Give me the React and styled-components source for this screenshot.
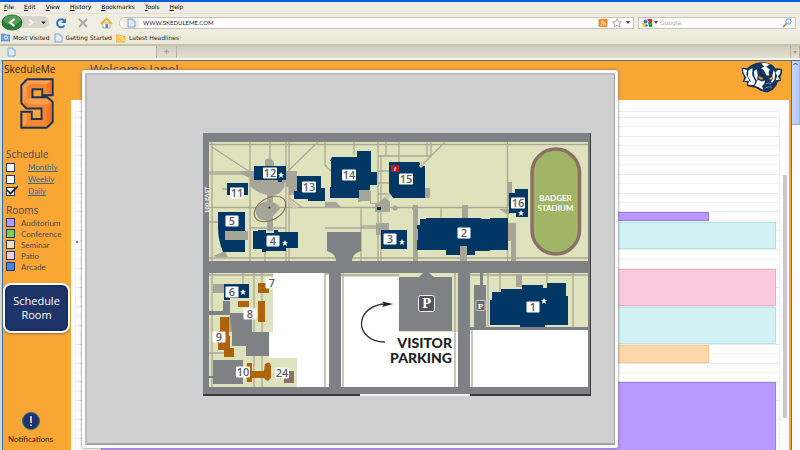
import React from 'react';
import styled, { createGlobalStyle } from 'styled-components';

const GlobalStyle = createGlobalStyle`
  * { box-sizing: border-box; }
  body { margin: 0; overflow: hidden; background: #ece9d8; }
  button, input { font: inherit; margin: 0; padding: 0; border: 0; background: none; }
`;

const NAVY = '#1f3468';
const ORANGE = '#faa635';

const Window = styled.div`
  height: 100vh;
  display: flex;
  flex-direction: column;
  position: relative;
  font-family: 'DejaVu Sans', sans-serif;
  font-size: 6px;
  color: #222;
`;

const TitleBar = styled.div`
  height: 2px;
  flex: none;
  background: #0a5be0;
`;

const Chrome = styled.header`
  flex: none;
  background: linear-gradient(#f0eee2, #f0eee3 45%, #e6e2cd);
`;

const MenuBar = styled.nav`
  height: 11px;
  display: flex;
  align-items: flex-start;
  gap: 10px;
  padding: 0 4px;
`;

const MenuButton = styled.button`
  line-height: 10px;
  &::first-letter { text-decoration: underline; }
`;

const NavBar = styled.div`
  height: 18px;
  display: flex;
  align-items: center;
  padding: 0 4px 0 1px;
  border-top: 1px solid #e4e1d0;
`;

const IconButton = styled.button`
  display: flex;
  flex: none;
  width: ${(p) => p.$w}px;
  margin-right: ${(p) => p.$gap || 0}px;
  svg { display: block; width: 100%; }
`;

const Field = styled.div`
  height: 12px;
  flex: ${(p) => p.$flex};
  display: flex;
  align-items: center;
  gap: ${(p) => p.$gap}px;
  padding: 0 3px;
  border: 1px solid #c9c5b5;
  border-radius: ${(p) => p.$radius};
  background: #fff;
  overflow: hidden;
  svg { flex: none; display: block; }
`;

const FieldCap = styled.span`
  width: 16px;
  height: 12px;
  flex: none;
  display: flex;
  align-items: center;
  justify-content: center;
  background: #f0eee2;
`;

const UrlInput = styled.input`
  flex: 1;
  min-width: 0;
  height: 10px;
  font-family: Lato, sans-serif;
  font-size: 6px;
  color: #222;
  outline: 0;
`;

const SearchInput = styled(UrlInput)`
  font-family: 'DejaVu Sans', sans-serif;
  &::placeholder { color: #aaa; opacity: 1; }
`;

const Bookmarks = styled.nav`
  height: 13px;
  display: flex;
  align-items: center;
  gap: 4px;
  padding: 0 1px;
`;

const Bookmark = styled.a`
  display: flex;
  align-items: center;
  gap: 3px;
  color: inherit;
  text-decoration: none;
  white-space: nowrap;
`;

const Tabs = styled.div`
  height: 16px;
  display: flex;
  align-items: stretch;
  border-top: 2px solid #c5c1b1;
  border-bottom: 2px solid #f5f3ea;
  background: linear-gradient(#cfccbc, #e4e1d2);
`;

const Tab = styled.div`
  width: 157px;
  padding: 1px 7px;
  background: #e9e6d7;
  border-right: 1px solid #b5b1a2;
`;

const TabButton = styled.button`
  width: 20px;
  border-right: 1px solid #b5b1a2;
  color: #888;
  line-height: 8px;
  &:last-child { width: 10px; margin-left: auto; border-left: 1px solid #b5b1a2; }
`;

const Page = styled.main`
  flex: 1;
  min-height: 0;
  display: flex;
  border-top: 1px solid #56737f;
  border-left: 2px solid #ded6c5;
  font-family: Lato, sans-serif;
`;

const Sidebar = styled.aside`
  width: 69px;
  flex: none;
  display: flex;
  flex-direction: column;
  padding: 1px 2px 6px 3px;
  border-left: 1px solid #2870a8;
  background: ${ORANGE};
`;

const Brand = styled.div`
  font: 10px/14px 'Open Sans', sans-serif;
  color: #1c1c1c;
  white-space: nowrap;
  margin-left: -2px;
`;

const TeamLogo = styled.svg`
  width: 34px;
  height: 51px;
  flex: none;
  margin: 2px 0 18px 14px;
`;

const Heading = styled.h2`
  margin: 0;
  font: 10px/14px 'Open Sans', sans-serif;
  color: #444a55;
`;

const List = styled.ul`
  margin: 0 0 6px;
  padding: 0;
  list-style: none;
`;

const ViewRow = styled.li`
  height: 12px;
  display: flex;
  align-items: center;
  gap: 13px;
`;

const CheckWrap = styled.span`
  position: relative;
  display: flex;
  svg {
    position: absolute;
    left: 0;
    top: -2px;
    pointer-events: none;
    opacity: 0;
  }
  input:checked + svg { opacity: 1; }
`;

const Checkbox = styled.input`
  appearance: none;
  width: 9px;
  height: 9px;
  background: #fff;
  border: 1px solid #27375f;
`;

const ViewLink = styled.a`
  font-size: 8px;
  line-height: 10px;
  color: #2f6c93;
`;

const RoomRow = styled.li`
  height: 11px;
  display: flex;
  align-items: center;
  gap: 6px;
  font-size: 8px;
  line-height: 10px;
  color: #4d4a50;
`;

const Swatch = styled.span`
  width: 9px;
  height: 9px;
  border: 1px solid #2b3a66;
  background: ${(p) => p.$color};
`;

const ScheduleButton = styled.button`
  height: 50px;
  flex: none;
  margin: 5px -1px 0 -3px;
  border: 2px solid #fff;
  border-radius: 8px;
  background: ${NAVY};
  box-shadow: inset 0 0 3px #0d1c45, 0 1px 2px #99662a;
  color: #fff;
  font: 11px/14px 'Open Sans', sans-serif;
`;

const Notifications = styled.button`
  margin-top: auto;
  display: flex;
  flex-direction: column;
  align-items: center;
  gap: 4px;
  padding-right: 14px;
  color: #1c1c1c;
  font-size: 8px;
  line-height: 10px;
`;

const Body = styled.div`
  flex: 1;
  min-width: 0;
  display: flex;
  flex-direction: column;
  border-right: 2px solid ${ORANGE};
  background: #fff;
`;

const Banner = styled.div`
  height: 39px;
  flex: none;
  display: flex;
  justify-content: space-between;
  padding: 0 6px 0 19px;
  background: ${ORANGE};
`;

const Welcome = styled.h1`
  margin: 0;
  font: 13px/16px 'Open Sans', sans-serif;
  color: #3d4763;
`;

const Sheet = styled.section`
  flex: 1;
  min-height: 0;
  display: flex;
  align-items: stretch;
  padding: 11px 2px 0 4px;
  gap: 3px;
`;

const Calendar = styled.div`
  flex: 1;
  display: flex;
  flex-direction: column;
  overflow: hidden;
`;

const AllDay = styled.div`
  height: 7px;
  flex: none;
  border: 1px solid #eee;
`;

const DayGrid = styled.div`
  display: grid;
  grid-template-columns: 25px 9fr 1fr 3px;
  grid-template-rows: repeat(4, 9px 10px 9px 10px 9px 10px 9px 10px 9px);
  border: 1px solid #eee;
  border-top: 0;
  border-bottom: 0;
`;

const Slot = styled.div`
  grid-column: 1 / -1;
  grid-row: ${(p) => p.$row};
  border-bottom: 1px solid ${(p) => (p.$row % 2 ? '#f4f4f4' : '#ebebeb')};
`;

const NowMark = styled.div`
  grid-column: 1;
  grid-row: 14;
  width: 2px;
  height: 2px;
  background: #d8505a;
`;

const Event = styled.div`
  grid-row: ${(p) => p.$from} / ${(p) => p.$to};
  grid-column: 2 / ${(p) => (p.$short ? 3 : 4)};
  border: 1px solid ${(p) => p.$edge};
  background: ${(p) => p.$fill};
  margin-bottom: 1px;
  z-index: 1;
`;

const SheetScroll = styled.div`
  width: 4px;
  flex: none;
  padding-top: 64px;
  &::before { content: ''; display: block; height: 243px; background: #c8caca; }
`;

const PageScroll = styled.div`
  width: 9px;
  flex: none;
  border-left: 1px solid #55748c;
  background: #fdfcf8;
`;

const ScrollThumb = styled.div`
  height: 64px;
  background: linear-gradient(90deg, #c5d5fb, #b4c8f6);
  border-right: 1px solid #a3b9ea;
  border-bottom: 1px solid #98afe2;
  svg { display: block; }
`;

const Dialog = styled.div`
  position: absolute;
  left: 82px;
  right: 182px;
  top: 70px;
  bottom: 2px;
  z-index: 3;
  border: 3px solid #fafafa;
  border-radius: 2px;
  padding: 60px 24px 0 118px;
  background: #d0d0d0;
  box-shadow: 0 0 3px #666, inset 2px 2px 0 #bcbcbc, inset -1px -2px 0 #a2a2a2;
`;

const MapSvg = styled.svg`
  display: block;
  width: 100%;
  height: auto;
`;

function PageIcon() {
  return (
    <svg width="9" height="10" viewBox="0 0 9 10">
      <path d="M1 1h5l2 2v6H1z" fill="#dfeaff" stroke="#6d91cf" strokeWidth=".8" />
      <path d="M6 1v2h2" fill="#fff" stroke="#6d91cf" strokeWidth=".6" />
    </svg>
  );
}

function Feed({ folder }) {
  return (
    <svg width="10" height="10" viewBox="0 0 10 10">
      {folder && <path d="M0 2h4l1 1h4v6H0z" fill="#ffd660" stroke="#d39a1c" strokeWidth=".6" />}
      <rect x={folder ? 2 : 0.5} y={folder ? 3 : 1} width={folder ? 7 : 9} height={folder ? 6 : 8} rx="1" fill={folder ? '#f8b73a' : '#eb8a2c'} />
      <path d="M3 4.6a3 3 0 0 1 3 3M3 3a5 5 0 0 1 5 5" fill="none" stroke="#fff" strokeWidth=".9" />
      <circle cx="3.3" cy="7.3" r=".8" fill="#fff" />
    </svg>
  );
}

function Caret() {
  return <svg width="4" height="3" viewBox="0 0 4 3"><path d="M0 0h4L2 3z" fill="#444" /></svg>;
}

function BlockS() {
  const shape = 'M80 70H158V118H126V100H96V124H142L158 138V198L140 216H62V168H94V190H124V158H78L62 142V88Z';
  return (
    <TeamLogo viewBox="58 66 104 154" preserveAspectRatio="none" role="img" aria-label="S">
      <path d={shape} fill="#f68530" />
      <path d="M82 72H154L140 84H88L78 94V124L66 140V90Z" fill="#fb9f4e" />
      <path d="M80 128H140L150 140L134 146H84L74 134Z" fill="#fb9f4e" />
      <path d="M140 84L154 74V114L140 110ZM140 150L154 142V196L140 204Z" fill="#f17526" />
      <path d="M66 172H78V202L66 212Z" fill="#fb9f4e" />
      <path d={shape} fill="none" stroke="#17365f" strokeWidth="6" />
    </TeamLogo>
  );
}

function Badger() {
  return (
    <svg width="42" height="33" viewBox="604 187 128 98" role="img" aria-label="Badger">
      <path d="M606 206L624 207Q636 193 660 190Q688 187 704 202L708 208L729 209Q731 224 724 234L726 246L716 249L712 260L700 274L684 282L664 277L650 268L622 262L622 250L609 250L614 236Q606 222 606 206Z" fill="#12355f" />
      <path d="M610 210L623 213L620 227L631 248L624 246L614 247L621 236Q610 224 610 210Z" fill="#fff" />
      <path d="M627 214L639 207L638 228L648 249L643 259L626 258L628 247L635 250L625 232Z" fill="#fff" />
      <path d="M643 216L652 211L655 228L653 246L645 234Z" fill="#fff" />
      <path d="M666 193Q680 190 691 196L681 203L692 212L688 219L690 230L682 230L674 215L665 208L675 203Z" fill="#fff" />
      <path d="M655 243L668 248L678 244L675 255L668 262L672 273L656 265L646 261Z" fill="#fff" />
      <path d="M725 213Q725 225 716 233L723 242L710 244L714 231L709 221L716 213Z" fill="#fff" />
      <path d="M704 212L708 224L706 242L699 252L694 248L702 240L699 232Z" fill="#fff" />
      <path d="M657 231L671 238L669 243L659 240ZM690 238L701 233L700 241L692 243Z" fill="#f5a02c" />
      <path d="M681 255Q688 250 696 256M678 268Q688 261 698 266" fill="none" stroke="#a8bfd9" strokeWidth="2" />
    </svg>
  );
}

const MAP_LABELS = [
  [12, 270, 173], [11, 237, 193], [13, 309, 187], [5, 232, 221], [4, 273, 241],
  [14, 349, 175], [15, 406, 179], [3, 390, 239], [2, 464, 233], [16, 518, 203],
  [6, 232, 292], [7, 272, 283], [8, 250, 314], [9, 219, 337], [10, 243, 372],
  [24, 282, 373], [1, 533, 307],
];

const STARS = [[281, 175], [285, 243], [402, 242], [521, 213], [243, 292], [544, 301]];

function CampusMap() {
  return (
    <MapSvg viewBox="203 133 388 263" role="img" aria-label="Campus map">
      <path d="M203 133H591V396H203Z" fill="#808184" />
      <path d="M209 142H588V261H209Z" fill="#dfe3bd" />
      <path d="M209 273H329V387H209ZM341 273H458V387H341ZM470 273H588V387H470Z" fill="#fff" />
      <path d="M209 273H273V332H269V358H297V387H209ZM399 273H458V332H399ZM470 273H588V330H470ZM341 273H399V277H341Z" fill="#dfe3bd" />
      <g fill="none" stroke="#aaa995" strokeWidth="1.3">
        <path d="M209 144.5H588M209 258H588M212 142V261M250 142V261M286 142V261M289 142V261M325 142V165L333 173M209 172H250M209 174H250M212 147L250 172M318 142L286 173M209 207.500H510M222 189H235M209 222H222M250 228H286M265 250V261M354 142V155M378 142V261M381 155V261M386 142V156M399 142V162M427 142V156M431 142V156M378 156H431M378 171H395M378 183H395M378 194H395M445 142L421 166M361 208V261M325 228H378M361 226H378M441 208V220M507.500 142V261M465 205V216M288 197L303 208M417 242H427M270 142V162" />
        <path d="M209 275H273M212 273V387M243 273V284M254 273V387M262 273V387M209 353H225M325 273V387M329 274H325M341 275H399M343 273V387M455 273V387M470 275H588M472 327V387M488 273V327M500 273V291M547 273V283M573 273V327" />
      </g>
      <g fill="#a6a698">
        <path d="M265 160Q270 156 274 162V171H285V180Q286 192 273 196V202Q282 206 279 210L273 216V231H267V221Q254 220 256 209Q260 202 267 201V195Q257 193 250 186V178L241 174V171H265ZM286 171H297V195H289V187H286ZM325 207V202H336L341 207ZM375 213V204H370V201H358V191H371V203H378L385 197L390 202V212H375ZM430 188V198H421V188ZM376 223H389V235H376ZM371 192L360 202H358V190H369ZM462 205H468V218H462ZM508 182H512V206H507ZM499 209H510V214H507ZM507 223H516V261H511V241H507ZM460 246H467V261H460ZM213 256L225 251L228 257H217ZM213 284H225V293H213ZM516 274H522V287H516ZM229 316H232V332H229Z" />
        <path d="M413 205H418V261H413Z" />
        <circle cx="415" cy="208" r="3" /><circle cx="395" cy="208" r="2.500" />
      </g>
      <ellipse cx="270" cy="209" rx="17" ry="11" transform="rotate(-30 270 209)" fill="none" stroke="#8c725c" strokeWidth="1.200" />
      <circle cx="269.500" cy="207.500" r="1" fill="#222" />
      <g fill="#808184">
        <path d="M327 232H361V251Q352 254 352 261H336Q336 254 327 251ZM209 311H223V301H230V313H252V332H269V356H246V346H232V332L230 315H209ZM213 360H243V384H213V378H209V376H213Z" />
        <path d="M399 277H419L423 273H429L434 277H452V331H399ZM474 285H480V273H483V285H486V327H588V330H470V327H474Z" />
      </g>
      <g fill="#003764">
        <path d="M254 166H286V180H282V182H278V180H254ZM227 183H248V195H227ZM297 176H321V188H325V201H308V199H294V191H297ZM218 212H245V231H225V240H245V252H223Q218 240 218 228ZM253 231H258V230H266V233H274V230H278V232H298V248H286V251H266V252H262V249H253ZM332 157H357V151H371V172H377V185H370V190H359V198H330V187H331V161H330ZM389 162H419L422 166H425V198H393L389 192ZM381 230H407V249H381ZM420 219H426V218H480L482 219H490V218H508V250H491L489 251H475V255H446V250H417V240H418V229H417V225H420ZM515 189H528V217H516V213H509V193H515Z" />
        <path d="M224 284H249V298H230V300H224ZM490 300H492V292H501V289H522V285H543V288H547V283H566V296H568V325H545V327H520V325H490ZM377 207H381V210H377Z" />
      </g>
      <path d="M460 246H467V255H460ZM225 231H248V240H225Z" fill="#a6a698" />
      <path d="M421 162L424 165L421 168L419 166ZM388 193L392 196L388 199L385 196ZM288 197L298 208H293L288 202Z" fill="#cfc7ab" />
      <path d="M258 283H269V293H258ZM238 301H249V307H238ZM258 301H265V322H258ZM220 317H229V336H230V348H234V357H224V350H218V331H220ZM247 363H252V371H264L265 364Q270 360 271 366V377Q268 384 264 378H252V382H247L246 372Z" fill="#ad640c" />
      <path d="M284 371H294V383H284Z" fill="#8a7065" />
      <rect x="532" y="149" width="47.500" height="105" rx="23.700" fill="#a0b566" stroke="#8b7066" strokeWidth="3.500" />
      <g fill="#fff" fontFamily="Lato, sans-serif" fontSize="8" fontWeight="700" textAnchor="middle">
        <text x="555.500" y="201">BADGER</text>
        <text x="555.500" y="211">STADIUM</text>
      </g>
      <rect x="391" y="165" width="8" height="7" fill="#b71f26" />
      <text x="395" y="171" fill="#fff" fontFamily="Liberation Serif, serif" fontStyle="italic" fontWeight="700" fontSize="7" textAnchor="middle">i</text>
      {MAP_LABELS.map(([n, x, y]) => (
        <g key={n}>
          <rect x={x - (n > 9 ? 7 : 6.5)} y={y - 5.5} width={n > 9 ? 14 : 13} height="11" rx="1" fill="#fff" />
          <text x={x} y={y + 4} fill="#5b5d66" fontFamily="Open Sans, sans-serif" fontWeight="600" fontSize="11" textAnchor="middle">{n}</text>
        </g>
      ))}
      {STARS.map(([x, y]) => (
        <path key={x} transform={`translate(${x} ${y})`} d="M0-3L.9-1H3L1.300.400L2 3L0 1.500L-2 3L-1.300.400L-3-1H-.9Z" fill="#fff" />
      ))}
      <rect x="418.500" y="295.500" width="16" height="16" rx="2" fill="#55565a" stroke="#eee" />
      <rect x="476" y="300.500" width="9" height="10" rx="1" fill="#666" stroke="#ddd" strokeWidth=".8" />
      <g fill="#fff" fontFamily="DejaVu Serif, serif" fontWeight="700" textAnchor="middle">
        <text x="426.500" y="308" fontSize="12">P</text>
        <text x="480.500" y="308.500" fontSize="8">P</text>
      </g>
      <path d="M385 342C368 342 361 331 361.500 323C362 312 373 304 386 304" fill="none" stroke="#333" strokeWidth="1.300" />
      <path d="M393 304L382 301.500L384 304L382 307Z" fill="#222" />
      <g fill="#202124" fontFamily="Lato, sans-serif" fontWeight="900" fontSize="14" textAnchor="end">
        <text x="452" y="348">VISITOR</text>
        <text x="452" y="363">PARKING</text>
      </g>
      <text transform="translate(209 213) rotate(-90)" fill="#fff" fontFamily="Lato, sans-serif" fontWeight="700" fontSize="6">100 EAST</text>
      <path d="M590 133H591V396H590ZM203 394H360V396H203ZM470 394H591V396H470Z" fill="#3d3d40" />
      <path d="M360 394H470V396H360Z" fill="#f2f2f2" />
    </MapSvg>
  );
}

const VIEWS = ['Monthly', 'Weekly', 'Daily'];

const ROOMS = [
  ['Auditorium', '#b899ff'],
  ['Conference', '#75d546'],
  ['Seminar', '#fdd9ab'],
  ['Patio', '#f9cadb'],
  ['Arcade', '#4787e4'],
];

const TEAL = ['#d2f1f3', '#b0e3e6'];
const PURPLE = ['#b899ff', '#9b7ee0'];
const EVENTS = [
  [11, 12, PURPLE, true],
  [12, 15, TEAL, false],
  [17, 21, ['#facbdc', '#f1abc4'], false],
  [21, 25, TEAL, false],
  [25, 27, ['#fed8aa', '#f6c68d'], true],
  [29, 37, PURPLE, false],
];

export default function App() {
  return (
    <>
      <GlobalStyle />
      <Window>
        <TitleBar />
        <Chrome>
          <MenuBar aria-label="Menu">
            {['File', 'Edit', 'View', 'History', 'Bookmarks', 'Tools', 'Help'].map((m) => (
              <MenuButton key={m}>{m}</MenuButton>
            ))}
          </MenuBar>
          <NavBar>
            <IconButton $w={48} $gap={6} aria-label="Back and forward">
              <svg viewBox="0 0 48 17">
                <path d="M10 2H42Q48 2 48 8.500Q48 14 42 14H10Z" fill="#d7d5cd" />
                <ellipse cx="11" cy="8.500" rx="10.500" ry="8" fill="#2f7d35" />
                <ellipse cx="11" cy="6" rx="8.500" ry="4.500" fill="#65a668" opacity=".7" />
                <path d="M13.500 5L9 8.500L13.500 12" fill="none" stroke="#fff" strokeWidth="2" />
                <path d="M28 5.500L31.500 8.500L28 11.500" fill="none" stroke="#f5f5f2" strokeWidth="2" />
                <path d="M40 7.500H45L42.500 10Z" fill="#222" />
              </svg>
            </IconButton>
            <IconButton $w={12} $gap={10} aria-label="Reload">
              <svg viewBox="0 0 12 12"><path d="M9.500 8.500A4 4 0 1 1 9 3.500" fill="none" stroke="#2a72cf" strokeWidth="2" /><path d="M11 1V6H6Z" fill="#2a72cf" /></svg>
            </IconButton>
            <IconButton $w={12} $gap={11} aria-label="Stop">
              <svg viewBox="0 0 12 12"><path d="M2 2L10 10M10 2L2 10" stroke="#aaa9a3" strokeWidth="2" /></svg>
            </IconButton>
            <IconButton $w={13} $gap={6} aria-label="Home">
              <svg viewBox="0 0 13 12"><path d="M3 6H10V11H3Z" fill="#fff" stroke="#a59260" strokeWidth=".7" /><path d="M1 7L6.500 1.500L12 7" fill="none" stroke="#efb22f" strokeWidth="1.800" /><path d="M5.500 7H8V11H5.500Z" fill="#5189cf" /></svg>
            </IconButton>
            <Field $flex="1" $gap={4} $radius="6px 0 0 6px">
              <FieldCap><PageIcon /></FieldCap>
              <UrlInput aria-label="Address" defaultValue="WWW.SKEDULEME.COM" />
              <Feed />
              <svg width="10" height="10" viewBox="0 0 10 10"><path d="M5 .8L6.300 3.700L9.500 4L7 6L7.800 9L5 7.400L2.200 9L3 6L.5 4L3.700 3.700Z" fill="#fff" stroke="#999" strokeWidth=".8" /></svg>
              <Caret />
            </Field>
            <IconButton as="span" $w={4} />
            <Field $flex="0 0 158px" $gap={2} $radius="0">
              <svg width="10" height="8" viewBox="0 0 10 8"><path d="M0 0H10V8H0Z" fill="#fff" /><path d="M5 0H10V3H7Z" fill="#d92b20" /><path d="M6 3H10V8H7Z" fill="#2a9a3f" /><path d="M0 4H3V8H1Z" fill="#f4bf2d" /><circle cx="3.500" cy="2.500" r="2" fill="#3a6dd8" /><circle cx="4.500" cy="6.500" r="1.300" fill="#3a6dd8" /></svg>
              <Caret />
              <SearchInput aria-label="Search" placeholder="Google" />
              <svg width="10" height="10" viewBox="0 0 10 10"><path d="M4.500 5.500L1 9" stroke="#a97856" strokeWidth="1.600" /><circle cx="6.500" cy="3.500" r="2.700" fill="#cdeafb" stroke="#6b9ed2" /></svg>
            </Field>
          </NavBar>
          <Bookmarks aria-label="Bookmarks">
            <Bookmark href="#visited">
              <svg width="9" height="9" viewBox="0 0 9 9"><path d="M0 1H4L5 2H9V8H0Z" fill="#76a5e9" stroke="#4976c1" strokeWidth=".6" /><circle cx="5" cy="4.500" r="1.500" fill="none" stroke="#e3f0ff" /></svg>
              Most Visited
            </Bookmark>
            <Bookmark href="#start"><PageIcon />Getting Started</Bookmark>
            <Bookmark href="#news"><Feed folder />Latest Headlines</Bookmark>
          </Bookmarks>
          <Tabs>
            <Tab><PageIcon /></Tab>
            <TabButton aria-label="New tab">✢</TabButton>
            <TabButton aria-label="List tabs">▾</TabButton>
          </Tabs>
        </Chrome>
        <Page>
          <Sidebar>
            <Brand>SkeduleMe</Brand>
            <BlockS />
            <Heading>Schedule</Heading>
            <List>
              {VIEWS.map((v) => (
                <ViewRow key={v}>
                  <CheckWrap>
                    <Checkbox type="checkbox" aria-labelledby={`view-${v}`} defaultChecked={v === 'Daily'} />
                    <svg width="13" height="10" viewBox="0 0 13 10"><path d="M1 5L4.500 8.500L12 1" fill="none" stroke="#111" strokeWidth="1.600" /></svg>
                  </CheckWrap>
                  <ViewLink id={`view-${v}`} href={`#${v}`}>{v}</ViewLink>
                </ViewRow>
              ))}
            </List>
            <Heading>Rooms</Heading>
            <List>
              {ROOMS.map(([name, color]) => (
                <RoomRow key={name}><Swatch $color={color} />{name}</RoomRow>
              ))}
            </List>
            <ScheduleButton>Schedule<br />Room</ScheduleButton>
            <Notifications>
              <svg width="18" height="18" viewBox="0 0 18 18"><circle cx="9" cy="9" r="8.500" fill={NAVY} stroke="#376b91" /><path d="M9 4V11M9 12.500V14" stroke="#fff" strokeWidth="1.400" /></svg>
              Notifications
            </Notifications>
          </Sidebar>
          <Body>
            <Banner>
              <Welcome>Welcome Jane!</Welcome>
              <Badger />
            </Banner>
            <Sheet>
              <Calendar>
                <AllDay />
                <DayGrid>
                  {Array.from({ length: 36 }, (_, i) => <Slot key={i} $row={i + 1} />)}
                  <NowMark />
                  {EVENTS.map(([from, to, [fill, edge], short]) => (
                    <Event key={from} $from={from} $to={to} $fill={fill} $edge={edge} $short={short} />
                  ))}
                </DayGrid>
              </Calendar>
              <SheetScroll />
            </Sheet>
          </Body>
          <PageScroll>
            <ScrollThumb>
              <svg width="7" height="6" viewBox="0 0 7 6"><path d="M1.500 4L3.500 2L5.500 4" fill="none" stroke="#345" /></svg>
            </ScrollThumb>
          </PageScroll>
        </Page>
        <Dialog role="dialog" aria-label="Campus map">
          <CampusMap />
        </Dialog>
      </Window>
    </>
  );
}
